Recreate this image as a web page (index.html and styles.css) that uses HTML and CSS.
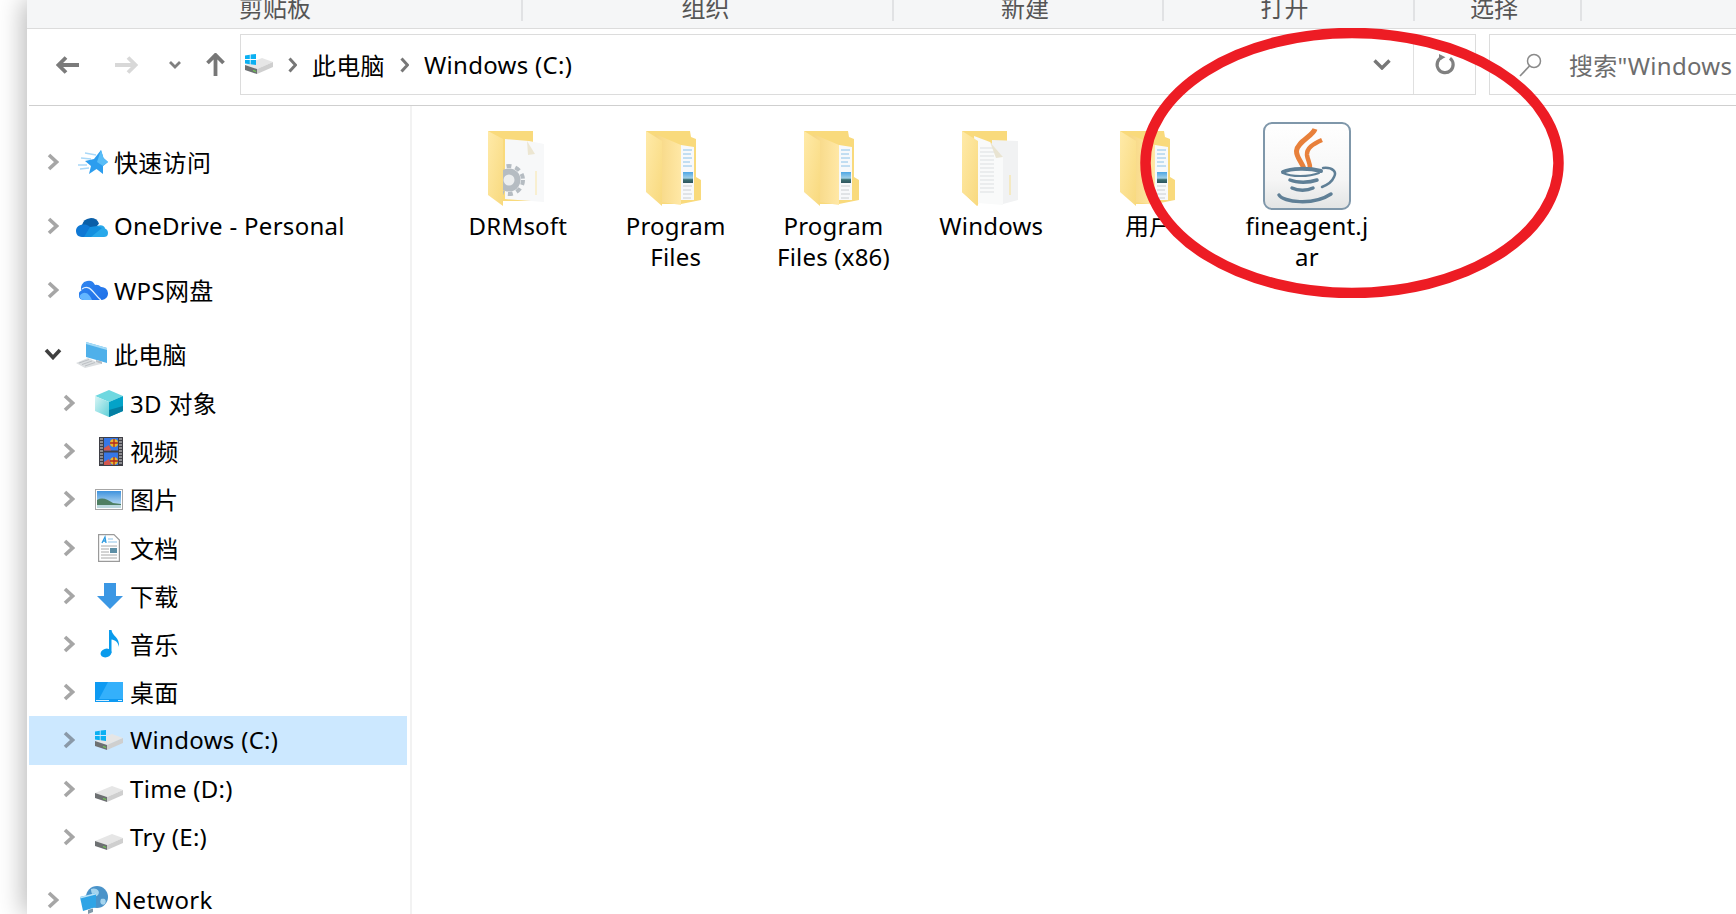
FILE: index.html
```html
<!DOCTYPE html>
<html lang="zh">
<head>
    <meta charset="UTF-8">
    <meta name="viewport" content="width=device-width, initial-scale=1.0">
    <title>Windows (C:)</title>
    <link rel="stylesheet" href="styles.css">
</head>
<body>

    <!-- shared icons -->
    <svg class="icon-defs" aria-hidden="true">
        <defs>
            <linearGradient id="flap" x1="0" y1="0" x2="1" y2="1">
                <stop offset="0" stop-color="#ffeaa8"/>
                <stop offset="1" stop-color="#f8d97e"/>
            </linearGradient>
            <linearGradient id="flap2" x1="0" y1="0" x2="1" y2="0">
                <stop offset="0" stop-color="#f6d682"/>
                <stop offset="1" stop-color="#ffe8a6"/>
            </linearGradient>
            <linearGradient id="jar" x1="0" y1="0" x2="0" y2="1">
                <stop offset="0" stop-color="#ffffff"/>
                <stop offset="0.65" stop-color="#f6f6f6"/>
                <stop offset="1" stop-color="#e2e4e4"/>
            </linearGradient>
            <linearGradient id="cube" x1="0" y1="0" x2="1" y2="1">
                <stop offset="0" stop-color="#d9f5f5"/>
                <stop offset="1" stop-color="#5fd0d8"/>
            </linearGradient>
            <linearGradient id="sky" x1="0" y1="0" x2="0" y2="1">
                <stop offset="0" stop-color="#3f93dd"/>
                <stop offset="1" stop-color="#d5ebf7"/>
            </linearGradient>
            <linearGradient id="wps" x1="0" y1="0" x2="1" y2="1">
                <stop offset="0" stop-color="#2f86f0"/>
                <stop offset="1" stop-color="#1f6fe8"/>
            </linearGradient>
            <linearGradient id="paper-pic" x1="0" y1="0" x2="0" y2="1">
                <stop offset="0" stop-color="#4ea6e4"/>
                <stop offset="0.55" stop-color="#9fd0e8"/>
                <stop offset="0.7" stop-color="#3b6f72"/>
                <stop offset="1" stop-color="#2d5560"/>
            </linearGradient>
            <filter id="soft" x="-5%" y="-5%" width="110%" height="110%">
                <feGaussianBlur stdDeviation="0.6"/>
            </filter>

            <symbol id="folder-docs" viewBox="0 0 56 75">
                <path d="M0 0H44L45 6L50 8V46L55 49V69L35 73H15Z" fill="#f9da7c"/>
                <path d="M35 14L48 16V69H35Z" fill="#f7f9fb"/>
                <path d="M37 19H46M37 23H45M37 27H46M37 31H44M37 35H46" stroke="#8cc2e8" stroke-width="1"/>
                <path d="M37 55H46M37 59H45M37 63H46M37 67H45" stroke="#c9ced2" stroke-width="1"/>
                <rect x="37" y="41" width="10" height="11" fill="url(#paper-pic)"/>
                <path d="M9 3L35 14V74L15 71Z" fill="url(#flap2)"/>
                <path d="M0 0L16 10V75L0 61Z" fill="url(#flap)"/>
            </symbol>

            <symbol id="drive" viewBox="0 0 28 17">
                <path d="M0 7L17 0L28 4L12 11Z" fill="#e6e6e6"/>
                <path d="M12 11L28 4V9L12 16Z" fill="#cfcfcf"/>
                <path d="M0 7L12 11V16L0 12Z" fill="#6d7072"/>
                <path d="M8 12.500L11 13.500" stroke="#6fd04f" stroke-width="1.200"/>
            </symbol>

            <symbol id="win-logo" viewBox="0 0 11 11">
                <path d="M0 1.400L4.800 .7V5H0ZM5.600 .6L11 0V5H5.600ZM0 6H4.800V10.300L0 9.600ZM5.600 6H11V11L5.600 10.300Z" fill="#0bb0f2"/>
            </symbol>
        </defs>
    </svg>

    <div class="window">
        <div class="ribbon">
            <div class="ribbon-group group-clipboard"><span>剪贴板</span></div>
            <div class="ribbon-group group-organize"><span>组织</span></div>
            <div class="ribbon-group group-new"><span>新建</span></div>
            <div class="ribbon-group group-open"><span>打开</span></div>
            <div class="ribbon-group group-select"><span>选择</span></div>
        </div>

        <div class="toolbar">
            <div class="nav-buttons">
                <svg class="nav-back" width="23" height="18" viewBox="0 0 23 18"><path d="M23 9H3M10 1.500L2.500 9L10 16.500" fill="none" stroke="#7b7b7b" stroke-width="3.800"/></svg>
                <svg class="nav-forward" width="23" height="18" viewBox="0 0 23 18"><path d="M0 9H20M13 1.500L20.500 9L13 16.500" fill="none" stroke="#d8d8d8" stroke-width="3.800"/></svg>
                <svg class="nav-recent" width="12" height="8" viewBox="0 0 12 8"><path d="M1 1L6 6L11 1" fill="none" stroke="#808080" stroke-width="2.800"/></svg>
                <svg class="nav-up" width="19" height="23" viewBox="0 0 19 23"><path d="M9.500 23V3M1.500 10L9.500 2L17.500 10" fill="none" stroke="#777" stroke-width="3.800"/></svg>
            </div>

            <div class="address">
                <div class="crumbs">
                    <svg class="drive-c" width="28" height="21" viewBox="0 0 28 21">
                        <use href="#drive" x="0" y="4" width="28" height="17"/>
                        <use href="#win-logo" x="0" y="0" width="11" height="11"/>
                    </svg>
                    <svg class="crumb-sep" width="9" height="16" viewBox="0 0 9 16"><path d="M1.500 1.500L7.500 8L1.500 14.500" fill="none" stroke="#777" stroke-width="3"/></svg>
                    <span class="crumb">此电脑</span>
                    <svg class="crumb-sep" width="9" height="16" viewBox="0 0 9 16"><path d="M1.500 1.500L7.500 8L1.500 14.500" fill="none" stroke="#777" stroke-width="3"/></svg>
                    <span class="crumb">Windows (C:)</span>
                </div>
                <div class="address-drop">
                    <svg width="18" height="11" viewBox="0 0 18 11"><path d="M1.500 1.500L9 9L16.500 1.500" fill="none" stroke="#777" stroke-width="3.400"/></svg>
                </div>
                <div class="address-refresh">
                    <svg width="21" height="21" viewBox="0 0 21 21"><path d="M8 3.300A8 8 0 1 0 16 4.300" fill="none" stroke="#808080" stroke-width="3.200"/><path d="M5 0V6.500L11.500 3.300Z" fill="#808080"/></svg>
                </div>
            </div>

            <div class="search">
                <svg width="23" height="24" viewBox="0 0 23 24"><circle cx="15" cy="8" r="6.500" fill="none" stroke="#8a8a8a" stroke-width="1.500"/><path d="M10.500 13L1 23" stroke="#8a8a8a" stroke-width="1.700"/></svg>
                <span class="search-text">搜索"Windows (C:)"</span>
            </div>
        </div>

        <div class="main">
            <nav class="tree">
                <a class="row top">
                    <svg class="chevron" viewBox="0 0 12 18"><path d="M2 2L9.500 9L2 16" /></svg>
                    <span class="row-icon"><svg width="31" height="24" viewBox="0 0 31 24">
                        <path d="M8 3L19 5M4 8L14 9M1 15L10 15M3 19L12 18" stroke="#a9d8f8" stroke-width="1.300"/>
                        <path d="M24 0L26.500 8L31 12L26 16L26 24L19.500 19L12 24L14 16L8 11L17 9Z" fill="#2c9dee"/>
                        <path d="M24 0L26.500 8L31 12L26 16L20 12Z" fill="#59bdf7"/>
                    </svg></span>
                    <span class="row-text">快速访问</span>
                </a>
                <a class="row top">
                    <svg class="chevron" viewBox="0 0 12 18"><path d="M2 2L9.500 9L2 16" /></svg>
                    <span class="row-icon"><svg width="32" height="21" viewBox="0 0 32 21">
                        <path d="M6 9A9 9 0 0 1 23 7.500L18 14L8 10Z" fill="#0a5fa8"/>
                        <path d="M6 21C1 21 0 17 0 15C0 11 3 8.500 8 8.500C10 8.500 12 9 14 11L24 21Z" fill="#0f78d4"/>
                        <path d="M14 21L21 10C25 8 29 10 29 12.500C31 13 32 15 32 17C32 20 30 21 28 21Z" fill="#28a8ea"/>
                        <path d="M8 21H15L26 12L21 10L14 11Z" fill="#1490df"/>
                    </svg></span>
                    <span class="row-text">OneDrive - Personal</span>
                </a>
                <a class="row top">
                    <svg class="chevron" viewBox="0 0 12 18"><path d="M2 2L9.500 9L2 16" /></svg>
                    <span class="row-icon"><svg width="29" height="20" viewBox="0 0 29 20">
                        <path d="M5 20A5 5 0 0 1 2.500 10.500A7 7 0 0 1 8 1A7 7 0 0 1 16 5A6.500 6.500 0 0 1 22 7A6.500 6.500 0 0 1 23 20Z" fill="url(#wps)"/>
                        <path d="M.5 16C5 10 10 13 13 20H5C2.500 20 1 18.500 .5 16Z" fill="#63b6ff"/>
                        <path d="M3 9C11 3 15 15 22 20" fill="none" stroke="#dff0ff" stroke-width="1.300"/>
                    </svg></span>
                    <span class="row-text">WPS网盘</span>
                </a>
                <a class="row top pc">
                    <svg class="chevron open" viewBox="0 0 18 12"><path d="M2 2L9 9.500L16 2" /></svg>
                    <span class="row-icon"><svg width="32" height="28" viewBox="0 0 32 28">
                        <path d="M10 2L31 8V23L10 17Z" fill="#4fb0ea"/>
                        <path d="M10 2L31 8V10L10 4Z" fill="#a7dcf7"/>
                        <path d="M20 20L26 21.500V24L20 23Z" fill="#b8bec4"/>
                        <path d="M0 23L12 18L25 24L9 28Z" fill="#dcdfe1"/>
                        <path d="M3 23L13 19.500M6 24.500L16 21M9 26L19 22.500" stroke="#bcc0c4" stroke-width="1"/>
                    </svg></span>
                    <span class="row-text">此电脑</span>
                </a>

                <a class="row child">
                    <svg class="chevron" viewBox="0 0 12 18"><path d="M2 2L9.500 9L2 16" /></svg>
                    <span class="row-icon"><svg width="28" height="27" viewBox="0 0 28 27">
                        <path d="M0 6L14 0L28 6L14 12Z" fill="#6ed8e0"/>
                        <path d="M0 6L14 12V27L0 21Z" fill="url(#cube)"/>
                        <path d="M14 12L28 6V21L14 27Z" fill="#04a3c8"/>
                        <path d="M14 20L28 16V21L14 27Z" fill="#047fa3"/>
                    </svg></span>
                    <span class="row-text">3D 对象</span>
                </a>
                <a class="row child">
                    <svg class="chevron" viewBox="0 0 12 18"><path d="M2 2L9.500 9L2 16" /></svg>
                    <span class="row-icon"><svg width="24" height="29" viewBox="0 0 24 29">
                        <rect width="24" height="29" fill="#3f3f46"/>
                        <path d="M1 2H4M1 5H4M1 8H4M1 11H4M1 14H4M1 17H4M1 20H4M1 23H4M1 26H4M20 2H23M20 5H23M20 8H23M20 11H23M20 14H23M20 17H23M20 20H23M20 23H23M20 26H23" stroke="#d9d9d9" stroke-width="1.200"/>
                        <rect x="5" y="1" width="14" height="12.500" fill="#3677e6"/>
                        <rect x="5" y="15.500" width="14" height="12.500" fill="#3677e6"/>
                        <circle cx="15" cy="6" r="4" fill="#e8b82c"/><path d="M11 6H19M15 2V10" stroke="#b3261e" stroke-width="1.300"/>
                        <circle cx="15" cy="24" r="3.800" fill="#e8b82c"/><path d="M11 24H19M15 20V28" stroke="#b3261e" stroke-width="1.300"/>
                        <path d="M5 11L10 8L12 13.500H5ZM5 25L10 22L12 28H5Z" fill="#d2574e"/>
                    </svg></span>
                    <span class="row-text">视频</span>
                </a>
                <a class="row child">
                    <svg class="chevron" viewBox="0 0 12 18"><path d="M2 2L9.500 9L2 16" /></svg>
                    <span class="row-icon"><svg width="28" height="21" viewBox="0 0 28 21">
                        <rect x=".5" y=".5" width="27" height="20" fill="#fff" stroke="#a6a6a6"/>
                        <rect x="2" y="2" width="24" height="17" fill="url(#sky)"/>
                        <path d="M2 11C7 8 12 10 18 14L26 15V17H2Z" fill="#4e7f62"/>
                        <rect x="2" y="16" width="24" height="3" fill="#bcd8de"/>
                    </svg></span>
                    <span class="row-text">图片</span>
                </a>
                <a class="row child">
                    <svg class="chevron" viewBox="0 0 12 18"><path d="M2 2L9.500 9L2 16" /></svg>
                    <span class="row-icon"><svg width="22" height="28" viewBox="0 0 22 28" class="row-icon-doc">
                        <path d="M.6 .6H16L21.400 6V27.400H.6Z" fill="#fff" stroke="#9a9a9a" stroke-width="1.200"/>
                        <path d="M4 9L7 3L8 9M5 7H8" fill="none" stroke="#2f9be0" stroke-width="1.300"/>
                        <path d="M10 5H15M10 8H19" stroke="#8fc4e8" stroke-width="1.200"/>
                        <path d="M3 12H19M3 15H11M3 18H11M3 21H19M3 24H19" stroke="#a8a8a8" stroke-width="1"/>
                        <rect x="12" y="14" width="7" height="5" fill="#5d8fa6"/>
                    </svg></span>
                    <span class="row-text">文档</span>
                </a>
                <a class="row child">
                    <svg class="chevron" viewBox="0 0 12 18"><path d="M2 2L9.500 9L2 16" /></svg>
                    <span class="row-icon"><svg width="26" height="26" viewBox="0 0 26 26">
                        <path d="M7 0H19V13H26L13 26L0 13H7Z" fill="#3b97e4"/>
                    </svg></span>
                    <span class="row-text">下载</span>
                </a>
                <a class="row child">
                    <svg class="chevron" viewBox="0 0 12 18"><path d="M2 2L9.500 9L2 16" /></svg>
                    <span class="row-icon row-icon-note"><svg width="20" height="28" viewBox="0 0 20 28">
                        <ellipse cx="6" cy="23" rx="5.500" ry="4.300" fill="#0a9bec" transform="rotate(-18 6 23)"/>
                        <path d="M9 0H11.500C12 6 20 7 19 17C18 12 15 10 11.500 9.500V23H9Z" fill="#0a9bec"/>
                    </svg></span>
                    <span class="row-text">音乐</span>
                </a>
                <a class="row child">
                    <svg class="chevron" viewBox="0 0 12 18"><path d="M2 2L9.500 9L2 16" /></svg>
                    <span class="row-icon"><svg width="28" height="20" viewBox="0 0 28 20">
                        <rect width="28" height="20" fill="#0e9af2"/>
                        <path d="M13 0H28V17H4Z" fill="#34b0fb"/>
                        <path d="M1 18.500H14M23 18.500H27" stroke="#d6efff" stroke-width="1"/>
                    </svg></span>
                    <span class="row-text">桌面</span>
                </a>
                <a class="row child selected">
                    <svg class="chevron" viewBox="0 0 12 18"><path d="M2 2L9.500 9L2 16" /></svg>
                    <span class="row-icon"><svg width="28" height="21" viewBox="0 0 28 21">
                        <use href="#drive" x="0" y="4" width="28" height="17"/>
                        <use href="#win-logo" x="0" y="0" width="11" height="11"/>
                    </svg></span>
                    <span class="row-text">Windows (C:)</span>
                </a>
                <a class="row child">
                    <svg class="chevron" viewBox="0 0 12 18"><path d="M2 2L9.500 9L2 16" /></svg>
                    <span class="row-icon row-icon-low"><svg width="28" height="17"><use href="#drive"/></svg></span>
                    <span class="row-text">Time (D:)</span>
                </a>
                <a class="row child">
                    <svg class="chevron" viewBox="0 0 12 18"><path d="M2 2L9.500 9L2 16" /></svg>
                    <span class="row-icon row-icon-low"><svg width="28" height="17"><use href="#drive"/></svg></span>
                    <span class="row-text">Try (E:)</span>
                </a>
                <a class="row top network">
                    <svg class="chevron" viewBox="0 0 12 18"><path d="M2 2L9.500 9L2 16" /></svg>
                    <span class="row-icon"><svg width="28" height="28" viewBox="0 0 28 28">
                        <circle cx="17" cy="11" r="11" fill="#4a93c9"/>
                        <path d="M11 3C16 1 21 5 18 9C15 12 11 9 11 3ZM21 13C25 12 27 14 25 18C22 20 19 17 21 13Z" fill="#a5d4ee"/>
                        <path d="M0 11L16 7V21L3 25Z" fill="#2fa4e6"/>
                        <path d="M0 11L16 7V8.500L.3 12.500Z" fill="#bde3f7"/>
                        <path d="M8 24L13 22.500V26L8 28Z" fill="#7f98a8"/>
                    </svg></span>
                    <span class="row-text">Network</span>
                </a>
            </nav>

            <section class="files">
                <div class="file">
                    <svg class="folder" width="56" height="75" viewBox="0 0 56 75">
                        <path d="M0 0H45V12L56 14V70H15Z" fill="#f9da7c"/>
                        <path d="M17 8L41 10L56 13V71L17 68Z" fill="#f7f8f9"/>
                        <path d="M39 10L47 23L40 24Z" fill="#ece6d2"/>
                        <path d="M48 40V64" stroke="#f9e6a8" stroke-width="1"/>
                        <circle cx="21" cy="49" r="11.500" fill="#b5bcc2"/>
                        <circle cx="21" cy="49" r="14" fill="none" stroke="#b5bcc2" stroke-width="4" stroke-dasharray="5 4"/>
                        <circle cx="21" cy="49" r="5.500" fill="#eceeef"/>
                        <path d="M0 0L15 8V75L0 64Z" fill="url(#flap)"/>
                    </svg>
                    <div class="file-name">DRMsoft</div>
                </div>
                <div class="file">
                    <svg class="folder" width="56" height="75"><use href="#folder-docs"/></svg>
                    <div class="file-name">Program<br>Files</div>
                </div>
                <div class="file">
                    <svg class="folder" width="56" height="75"><use href="#folder-docs"/></svg>
                    <div class="file-name">Program<br>Files (x86)</div>
                </div>
                <div class="file">
                    <svg class="folder" width="56" height="75" viewBox="0 0 56 75">
                        <path d="M0 0H45V10L15 75L0 61Z" fill="#f9da7c"/>
                        <path d="M30 9L56 10V69L41 73L30 70Z" fill="#f1f2f3"/>
                        <path d="M48 44V64" stroke="#f7e3a2" stroke-width="1.200"/>
                        <path d="M12 5L28 11L41 26V74L16 72Z" fill="#f9fafa"/>
                        <path d="M18 17H31M18 21H32M18 25H32M18 29H32M18 33H32M18 37H32M18 41H32M18 45H32M18 49H32M18 53H32M18 57H32M18 61H32" stroke="#dcdfe1" stroke-width="1"/>
                        <path d="M28 11L41 26L34 27Z" fill="#e9e4d2"/>
                        <path d="M0 0L16 10V75L0 61Z" fill="url(#flap)"/>
                    </svg>
                    <div class="file-name">Windows</div>
                </div>
                <div class="file">
                    <svg class="folder" width="56" height="75"><use href="#folder-docs"/></svg>
                    <div class="file-name">用户</div>
                </div>
                <div class="file">
                    <svg class="jar-icon" width="88" height="88" viewBox="0 0 88 88">
                        <rect x="1" y="1" width="86" height="86" rx="8" fill="url(#jar)" stroke="#7f97aa" stroke-width="2"/>
                        <g filter="url(#soft)">
                            <path d="M52 7C50 14 34 20 33.500 29C33.500 36 39 40 41 47" fill="none" stroke="#e8803a" stroke-width="5"/>
                            <path d="M59 18C50 22 43.500 26 44 33C44.500 38 47.500 41 47 47" fill="none" stroke="#e8803a" stroke-width="4.500"/>
                            <g fill="none" stroke="#5f7f96" stroke-linecap="round">
                                <path d="M20 50C28 46 46 46 58 49" stroke-width="4"/>
                                <path d="M20 51C28 55 46 55 56 51" stroke-width="2"/>
                                <path d="M27 58C34 61 46 61 54 58" stroke-width="3.500"/>
                                <path d="M29 66C35 69 44 69 50 66" stroke-width="3.500"/>
                                <path d="M60 46C70 45 74 50 71 55C69 60 64 63 59 65" stroke-width="2.500"/>
                                <path d="M16 73C20 80 50 84 68 72" stroke-width="3.500"/>
                            </g>
                        </g>
                    </svg>
                    <div class="file-name">fineagent.j<br>ar</div>
                </div>
            </section>
        </div>

        <!-- marker drawn over the screenshot -->
        <svg class="circle-mark" width="424" height="270" viewBox="0 0 424 270">
            <ellipse cx="212" cy="135" rx="206.500" ry="130" fill="none" stroke="#ed1c24" stroke-width="10.500"/>
        </svg>
    </div>

</body>
</html>
```

FILE: styles.css
```css
html, body {
    margin: 0;
    padding: 0;
    height: 100%;
    background-color: #ffffff;
    overflow: hidden;
}
body {
    font-family: "Noto Sans", "Noto Sans CJK SC", sans-serif;
    font-size: 24px;
    letter-spacing: 0.3px;
    color: #000000;
}
.icon-defs {
    position: absolute;
    width: 0;
    height: 0;
}
.window {
    position: relative;
    margin-left: 27px;
    height: 914px;
    overflow: hidden;
    background-color: #ffffff;
    box-shadow: -4px 0 24px rgba(0, 0, 0, 0.28);
}

/* ribbon captions, cut off at the top */
.ribbon {
    display: flex;
    height: 28px;
    background-color: #f5f6f7;
    border-bottom: 1px solid #dcdcdc;
    color: #555555;
    letter-spacing: 0;
}
.ribbon-group {
    display: flex;
    align-items: flex-end;
    justify-content: center;
    box-sizing: border-box;
    height: 21px;
    border-right: 2px solid #e1e2e4;
    line-height: 24px;
}
.ribbon-group span { margin-bottom: 1px; }
.group-clipboard { width: 496px; padding-left: 2px; }
.group-organize { width: 371px; padding-right: 4px; }
.group-new { width: 270px; padding-right: 6px; }
.group-open { width: 251px; padding-right: 8px; }
.group-select { width: 167px; padding-right: 7px; }

/* address row */
.toolbar {
    display: flex;
    height: 77px;
    box-sizing: border-box;
    margin-left: 2px;
    padding-top: 5px;
    border-bottom: 1px solid #cfcfcf;
}
.nav-buttons {
    display: flex;
    align-items: center;
    flex: none;
    width: 211px;
    height: 61px;
    padding-left: 27px;
    box-sizing: border-box;
}
.nav-forward { margin-left: 36px; }
.nav-recent { margin-left: 31px; }
.nav-up { margin-left: 25px; }
.address {
    display: flex;
    align-items: center;
    flex: none;
    width: 1236px;
    height: 61px;
    box-sizing: border-box;
    border: 1px solid #dcdcdc;
}
.crumbs {
    display: flex;
    align-items: center;
    flex: 1;
    padding-left: 4px;
}
.crumb-sep { margin-left: 15px; }
.crumb { margin-left: 15px; }
.address-drop {
    display: flex;
    align-items: center;
    justify-content: center;
    width: 62px;
}
.address-refresh {
    display: flex;
    align-items: center;
    justify-content: center;
    width: 61px;
    height: 59px;
    border-left: 1px solid #e0e0e0;
}
.search {
    display: flex;
    align-items: center;
    flex: none;
    width: 400px;
    height: 61px;
    box-sizing: border-box;
    margin-left: 13px;
    padding-left: 29px;
    border: 1px solid #dcdcdc;
    color: #6d6d6d;
    white-space: nowrap;
}
.search-text { margin-left: 27px; }

/* content area */
.main {
    display: flex;
    height: 808px;
}
.tree {
    width: 385px;
    flex: none;
    box-sizing: border-box;
    padding-top: 24px;
    padding-left: 2px;
    border-right: 2px solid #f2f2f2;
}
.row {
    display: flex;
    align-items: center;
    height: 64px;
    margin-right: 3px;
    white-space: nowrap;
}
.row.top { padding-left: 18px; }
.row.child {
    height: 48.2px;
    padding-left: 34px;
}
.row.pc {
    height: 48px;
    margin-top: 8px;
    margin-bottom: 1px;
}
.row.network {
    height: 48px;
    margin-top: 15px;
}
.row.selected { background-color: #cce8ff; }
.row-text {
    margin-bottom: 1px;
    margin-left: -1px;
}
.chevron {
    width: 12px;
    height: 18px;
    flex: none;
    fill: none;
    stroke: #a6a6a6;
    stroke-width: 3.6px;
}
.chevron.open {
    width: 18px;
    height: 12px;
    margin-left: -3px;
    margin-right: -3px;
    stroke: #404040;
}
.row.selected .chevron { stroke: #8a99a8; }
.row-icon {
    display: flex;
    align-items: center;
    justify-content: flex-end;
    box-sizing: border-box;
    width: 56px;
    padding-right: 7px;
    flex: none;
}
.row.child .row-icon { padding-right: 8px; }
.row.child .row-icon-note { padding-right: 11px; }
.row-icon-doc { margin-right: 3px; }
.row-icon-low { padding-top: 12px; }

/* large icon view */
.files {
    display: flex;
    align-items: flex-start;
    padding-top: 16px;
    padding-left: 27px;
}
.file {
    display: flex;
    flex-direction: column;
    align-items: center;
    width: 157.8px;
    flex: none;
}
.folder {
    display: block;
    margin-top: 9px;
    margin-bottom: 4px;
    margin-right: 3px;
}
.jar-icon { display: block; }
.file-name {
    text-align: center;
    line-height: 31px;
    letter-spacing: 0.2px;
}
.circle-mark {
    position: absolute;
    left: 1113px;
    top: 28px;
}
```
